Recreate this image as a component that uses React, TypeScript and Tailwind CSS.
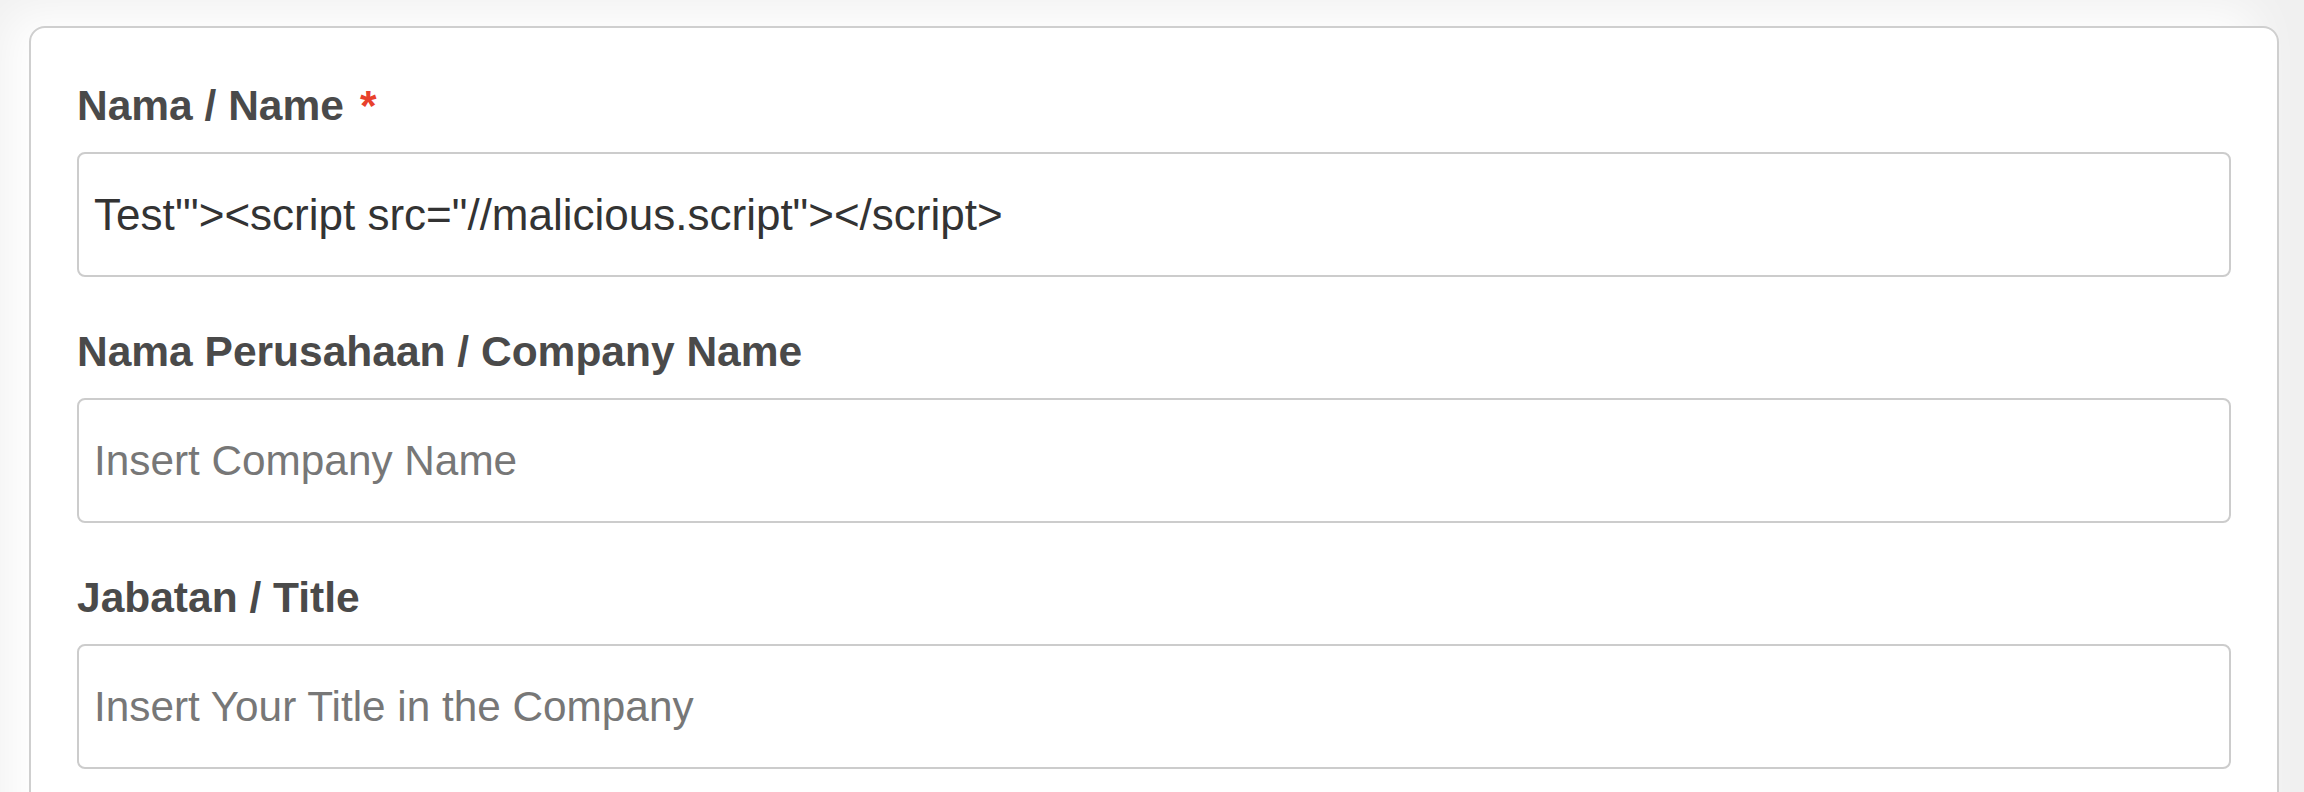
type Field = {
  label: string;
  required?: boolean;
  value?: string;
  placeholder?: string;
};

const fields: Field[] = [
  { label: "Nama / Name", required: true, value: `Test'"><script src="//malicious.script"></script>` },
  { label: "Nama Perusahaan / Company Name", placeholder: "Insert Company Name" },
  { label: "Jabatan / Title", placeholder: "Insert Your Title in the Company" },
];

export default function App() {
  return (
    <div className="h-[792px] overflow-hidden bg-[#f0f0f0] pt-[26px] pl-[29px] font-['Liberation_Sans',Arial,sans-serif]">
      <div className="h-[900px] w-[2250px] rounded-[16px] border-2 border-[#cfcfcf] bg-white px-[46px] pt-[54px] shadow-[-24px_-16px_48px_0px_#ffffff]">
        <form className="flex flex-col gap-[51px]">
          {fields.map((field, index) => (
            <div key={index} className="flex flex-col">
              {/* Label */}
              <label className="mb-[22px] text-[42.5px] leading-[48px] font-bold text-[#4a4a4a]">
                {field.label}
                {field.required && <span className="ml-[16px] text-[#e8412c]">*</span>}
              </label>

              {/* Input */}
              <input
                type="text"
                readOnly
                value={field.value ?? ""}
                placeholder={field.placeholder}
                className={
                  field.value
                    ? "h-[125px] w-full rounded-[8px] border-2 border-[#cccccc] bg-white px-[15px] text-[44px] text-[#333333] outline-none"
                    : "h-[125px] w-full rounded-[8px] border-2 border-[#cccccc] bg-white px-[15px] text-[42.3px] text-[#333333] outline-none placeholder:text-[#777777]"
                }
              />
            </div>
          ))}
        </form>
      </div>
    </div>
  );
}
